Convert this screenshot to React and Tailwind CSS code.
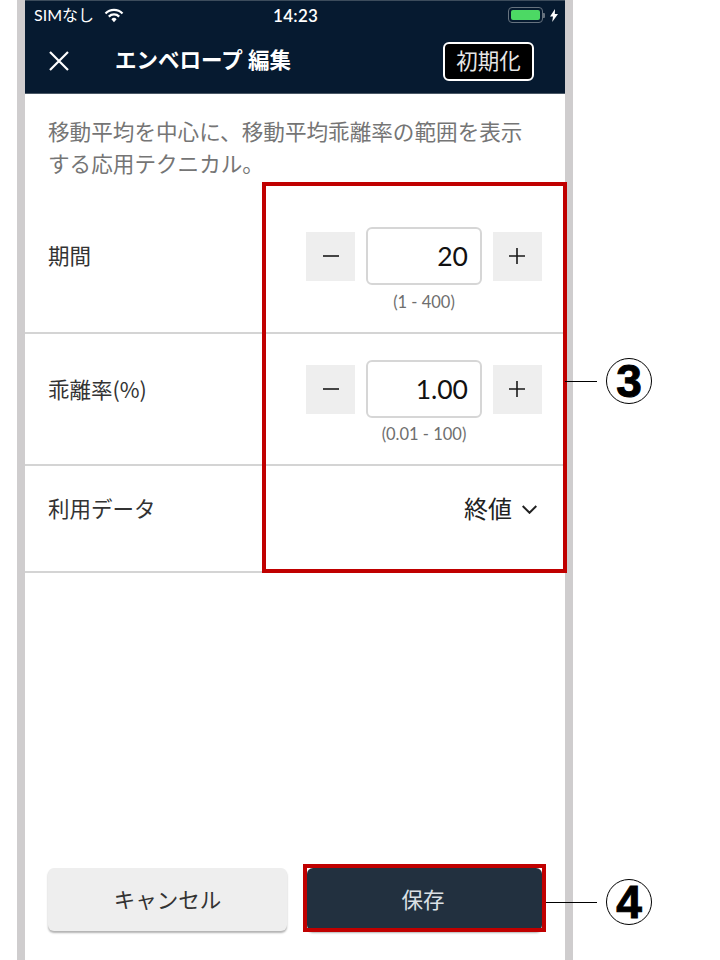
import React from "react";

function Stepper({ value, range, rangeGap }) {
  return (
    <div className="flex flex-col items-center">
      <div className="flex items-center gap-[11px]">
        <button className="w-[49px] h-[49px] bg-[#eeeeee] flex items-center justify-center">
          <svg width="16" height="16" viewBox="0 0 16 16"><path d="M0 8h16" stroke="#1a1a1a" strokeWidth="1.6" /></svg>
        </button>
        <div className="w-[116px] h-[58px] border-2 border-[#d6d6d6] rounded-[6px] flex items-center justify-end pr-[12px] pt-[2px] text-[26.5px] text-[#111111]">
          {value}
        </div>
        <button className="w-[49px] h-[49px] bg-[#eeeeee] flex items-center justify-center">
          <svg className="-ml-[1px] mr-[1px]" width="16" height="16" viewBox="0 0 16 16"><path d="M0 8h16M8 0v16" stroke="#1a1a1a" strokeWidth="1.6" /></svg>
        </button>
      </div>
      <div className={`${rangeGap} text-[16.5px] leading-[20px] text-[#6e6e6e]`}>{range}</div>
    </div>
  );
}

function Leader({ numeral, lineWidth, className }) {
  return (
    <div className={`absolute flex items-center ${className}`}>
      <div className="h-px bg-black" style={{ width: lineWidth }} />
      <div className="ml-[9px] w-[46px] h-[46px] rounded-full border-[1.5px] border-black flex items-center justify-center font-['Liberation_Sans',sans-serif] text-[46px] leading-none font-bold text-black [-webkit-text-stroke:1px_black]">{numeral}</div>
    </div>
  );
}

export default function App() {
  return (
    <div className="relative w-[720px] h-[960px] bg-white overflow-hidden font-['Lato','Noto_Sans_CJK_JP',sans-serif]">
      <div className="ml-[17px] w-[556px] h-[960px] border-x-8 border-[#cfcdce] flex flex-col bg-white">
        <header className="h-[94px] bg-[#061a30] border-t border-[#3c4c5c] border-b border-b-[#4a5866] flex flex-col text-white shrink-0">
          <div className="h-[28px] flex items-center pl-[9px] pr-[7px] relative">
            <span className="text-[16px] leading-none">SIMなし</span>
            <svg className="ml-[10px]" width="20" height="15" viewBox="0 0 20 15" fill="none">
              <path d="M1.5 5.5a12 12 0 0 1 17 0" stroke="white" strokeWidth="2.2" />
              <path d="M4.8 8.6a7.4 7.4 0 0 1 10.4 0" stroke="white" strokeWidth="2.2" />
              <path d="M10 14.2l-2.6-3a3.6 3.6 0 0 1 5.2 0z" fill="white" />
            </svg>
            <span className="absolute left-[248px] text-[17px] leading-none font-semibold tracking-[0.3px]">14:23</span>
            <div className="ml-auto flex items-center">
              <div className="w-[35px] h-[16px] rounded-[4px] border border-[#66727e] p-[2px]">
                <div className="w-full h-full rounded-[2px] bg-[#4cd964]" />
              </div>
              <div className="w-[2px] h-[5px] bg-[#66727e] rounded-r-[1px]" />
              <svg className="ml-[5px]" width="8" height="13" viewBox="0 0 8 13"><path d="M5 0L0 7.5h3L2.2 13 8 5H4.8z" fill="white" /></svg>
            </div>
          </div>
          <div className="flex-1 flex items-center pl-[24px] pr-[31px]">
            <svg width="20" height="20" viewBox="0 0 20 20" fill="none"><path d="M1 1l18 18M19 1L1 19" stroke="white" strokeWidth="2.2" /></svg>
            <span className="ml-[46px] text-[21.5px] font-bold leading-none">エンベロープ 編集</span>
            <button className="ml-auto mt-[1px] w-[91px] h-[39px] bg-black border-2 border-white rounded-[6px] text-[21.5px] text-[#e6e6e6] flex items-center justify-center">初期化</button>
          </div>
        </header>

        <p className="pt-[22px] pl-[23px] h-[89px] text-[21.6px] leading-[32px] text-[#757575] shrink-0 whitespace-nowrap">
          移動平均を中心に、移動平均乖離率の範囲を表示<br />する応用テクニカル。
        </p>

        <div className="h-[151px] border-b-2 border-[#d4d4d4] flex items-start justify-between pl-[23px] pr-[23px] pt-[44px] shrink-0">
          <span className="text-[21.5px] leading-[58px] text-[#333333]">期間</span>
          <Stepper value="20" range="(1 - 400)" rangeGap="mt-[7px]" />
        </div>
        <div className="h-[132px] border-b-2 border-[#d4d4d4] flex items-start justify-between pl-[23px] pr-[23px] pt-[26px] shrink-0">
          <span className="text-[21.5px] leading-[58px] font-['Noto_Sans_CJK_JP',sans-serif] text-[#333333]">乖離率(%)</span>
          <Stepper value="1.00" range="(0.01 - 100)" rangeGap="mt-[6px]" />
        </div>
        <div className="h-[107px] border-b-2 border-[#d4d4d4] flex items-start justify-between pl-[23px] pr-[28px] pt-[25px] shrink-0">
          <span className="text-[21.5px] leading-[36px] text-[#333333]">利用データ</span>
          <div className="flex items-center h-[36px] text-[24px] text-[#222222]">
            終値
            <svg className="ml-[10px]" width="15" height="9" viewBox="0 0 15 9" fill="none"><path d="M0.7 1l6.8 6.8L14.3 1" stroke="#222222" strokeWidth="2" /></svg>
          </div>
        </div>

        <div className="flex-1" />

        <div className="flex gap-[20px] pl-[23px] pb-[29px] shrink-0">
          <button className="w-[239px] h-[63px] pt-[2px] bg-[#eeeeee] rounded-[6px] shadow-[0_2px_2px_rgba(0,0,0,0.3)] text-[21.5px] text-[#333333]">キャンセル</button>
          <button className="w-[235px] h-[63px] pt-[2px] pr-[3px] bg-[#22303f] rounded-[6px] shadow-[0_2px_2px_rgba(0,0,0,0.3)] text-[21.5px] text-[#dbe0e5]">保存</button>
        </div>
      </div>

      <div className="absolute left-[262px] top-[182px] w-[305px] h-[391px] border-4 border-[#c00000]" />
      <div className="absolute left-[303px] top-[864px] w-[243px] h-[68px] border-4 border-[#c00000]" />
      <Leader numeral="3" lineWidth={32} className="left-[565px] top-[358px]" />
      <Leader numeral="4" lineWidth={51} className="left-[546px] top-[879px]" />
    </div>
  );
}
